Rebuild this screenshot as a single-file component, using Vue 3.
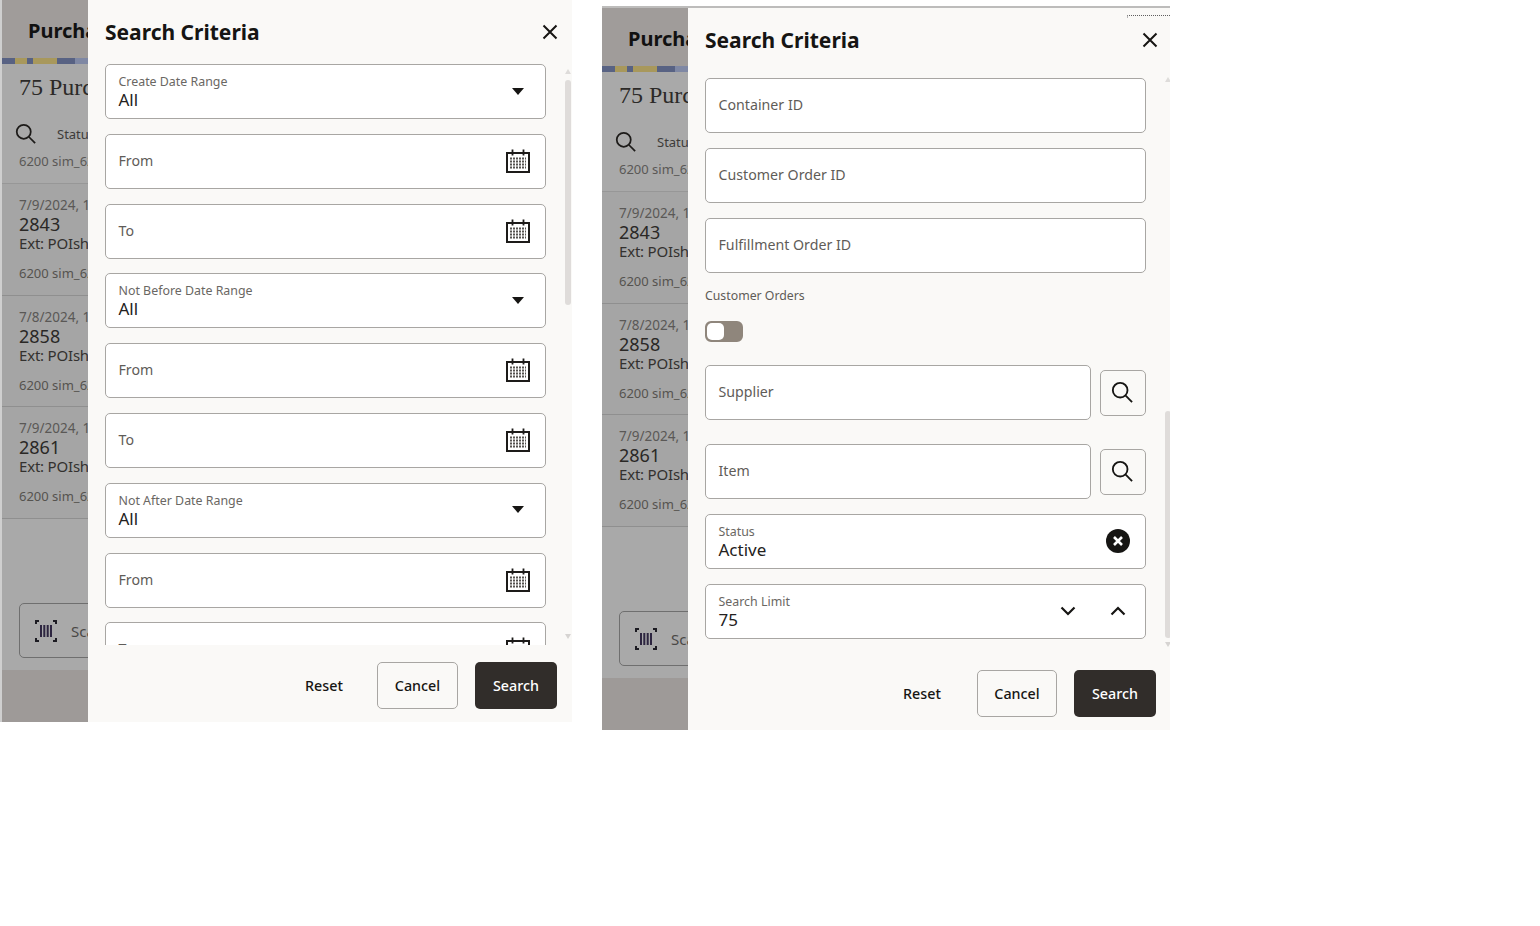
<script setup>
const orders = [
  { date: '7/9/2024, 1', id: '2843' },
  { date: '7/8/2024, 1', id: '2858' },
  { date: '7/9/2024, 1', id: '2861' },
]
const dateGroup = (label) => [
  { type: 'select', label, value: 'All' },
  { type: 'date', text: 'From' },
  { type: 'date', text: 'To' },
]
const panels = [
  {
    key: 'a',
    cls: 'panel-left',
    thumbTop: 16,
    thumbHeight: 225,
    fields: [
      ...dateGroup('Create Date Range'),
      ...dateGroup('Not Before Date Range'),
      ...dateGroup('Not After Date Range'),
    ],
  },
  {
    key: 'b',
    cls: 'panel-right',
    thumbTop: 339,
    thumbHeight: 227,
    fields: [
      { type: 'text', text: 'Container ID' },
      { type: 'text', text: 'Customer Order ID' },
      { type: 'text', text: 'Fulfillment Order ID' },
      { type: 'toggle', label: 'Customer Orders' },
      { type: 'lookup', text: 'Supplier', cls: 'lookup-first' },
      { type: 'lookup', text: 'Item', cls: 'lookup-second' },
      { type: 'clear', label: 'Status', value: 'Active' },
      { type: 'stepper', label: 'Search Limit', value: '75' },
    ],
  },
]
</script>

<template>
  <div class="page">
    <section v-for="panel in panels" :key="panel.key" class="panel" :class="panel.cls">
      <div class="behind">
        <div class="app-head">Purchase Orders</div>
        <div class="stripe"></div>
        <div class="count">75 Purchase Orders</div>
        <div class="tools">
          <svg class="tool-search" viewBox="0 0 24 24" fill="none" stroke="#1d1b19" stroke-width="2">
            <circle cx="10" cy="10" r="8" />
            <path d="M16 16l7 7" />
          </svg>
          <span>Status</span>
        </div>
        <div class="list">
          <div class="row-tail">6200 sim_6200</div>
          <div v-for="o in orders" :key="o.id" class="order">
            <div class="o-date">{{ o.date }}</div>
            <div class="o-id">{{ o.id }}</div>
            <div class="o-ext">Ext: POIshtest</div>
            <div class="o-loc">6200 sim_6200</div>
          </div>
        </div>
        <div class="scan-wrap">
          <div class="scan">
            <svg class="barcode" viewBox="0 0 24 24" fill="none">
              <path d="M2 5V2H5M19 2H22V5M2 19V22H5M19 22H22V19" stroke="#1c1b22" stroke-width="2" />
              <path d="M7 6V18M10.300 6V18M13.700 6V18M17 6V18" stroke="#2d2540" stroke-width="2" />
            </svg>
            <span>Scan</span>
          </div>
        </div>
        <div class="behind-foot"></div>
      </div>

      <div class="drawer">
        <header class="d-head">
          <h2>Search Criteria</h2>
          <svg class="close" viewBox="0 0 18 18" fill="none" stroke="#161513" stroke-width="2">
            <path d="M2.500 2.500l13 13M15.500 2.500l-13 13" />
          </svg>
        </header>

        <div class="d-body">
          <div class="fields">
            <template v-for="(f, i) in panel.fields" :key="i">
              <div v-if="f.type === 'toggle'" class="toggle-block">
                <div class="toggle-label">{{ f.label }}</div>
                <div class="toggle"><span class="knob"></span></div>
              </div>

              <div v-else-if="f.type === 'lookup'" class="lookup" :class="f.cls">
                <div class="field"><span class="ph">{{ f.text }}</span></div>
                <button class="lookup-btn" type="button" aria-label="Search">
                  <svg viewBox="0 0 24 24" fill="none" stroke="#161513" stroke-width="2">
                    <circle cx="10" cy="10" r="8" />
                    <path d="M16 16l7 7" />
                  </svg>
                </button>
              </div>

              <div v-else class="field">
                <div v-if="f.label" class="stack">
                  <span class="flabel">{{ f.label }}</span>
                  <span class="fvalue">{{ f.value }}</span>
                </div>
                <span v-else class="ph">{{ f.text }}</span>

                <svg v-if="f.type === 'select'" class="caret" viewBox="0 0 12 7">
                  <path d="M0 0h12L6 7z" fill="#161513" />
                </svg>

                <svg v-if="f.type === 'date'" class="cal" viewBox="0 0 24 24">
                  <path d="M1 4h22v19H1z" fill="none" stroke="#1d1b19" stroke-width="2" />
                  <path d="M6.500 0.500v6M17.500 0.500v6" stroke="#1d1b19" stroke-width="1.800" />
                  <path d="M4 9.500h16M4 12.500h16M4 15.500h16M4 18.500h16" stroke="#55524f" stroke-width="2" stroke-dasharray="2 1" />
                </svg>

                <svg v-if="f.type === 'clear'" class="clear" viewBox="0 0 24 24">
                  <circle cx="12" cy="12" r="12" fill="#161513" />
                  <path d="M8 8l8 8M16 8l-8 8" stroke="#fff" stroke-width="2.600" />
                </svg>

                <div v-if="f.type === 'stepper'" class="steps">
                  <svg viewBox="0 0 16 10" fill="none" stroke="#161513" stroke-width="2.200"><path d="M1.500 1.500L8 8l6.500-6.500" /></svg>
                  <svg viewBox="0 0 16 10" fill="none" stroke="#161513" stroke-width="2.200"><path d="M1.500 8.500L8 2l6.500 6.500" /></svg>
                </div>
              </div>
            </template>
          </div>

          <div class="scrollbar">
            <span class="arrow arrow-up"></span>
            <span class="thumb" :style="{ top: panel.thumbTop + 'px', height: panel.thumbHeight + 'px' }"></span>
            <span class="arrow arrow-down"></span>
          </div>
        </div>

        <footer class="d-foot">
          <button class="btn btn-text" type="button">Reset</button>
          <button class="btn btn-line" type="button">Cancel</button>
          <button class="btn btn-dark" type="button">Search</button>
        </footer>

        <span v-if="panel.key === 'b'" class="dotted"></span>
      </div>
    </section>
  </div>
</template>

<style scoped>
.page {
  display: flex;
  align-items: flex-start;
  gap: 30px;
  padding-left: 2px;
  height: 926px;
  box-sizing: border-box;
  background: #fff;
  font-family: "Noto Sans", "Open Sans", sans-serif;
  overflow: hidden;
}
.panel {
  display: flex;
  height: 722px;
  box-shadow: 0 -2px 0 #bdbcbb;
  flex: none;
  position: relative;
}
.panel-left { width: 570px; box-shadow: -2px 0 0 #cfcfcf; }
.panel-right { width: 568px; margin-top: 8px; }

.behind {
  width: 86px;
  flex: none;
  display: flex;
  flex-direction: column;
  overflow: hidden;
  background: #a9a9a9;
  white-space: nowrap;
}
.app-head {
  height: 58px;
  flex: none;
  box-sizing: border-box;
  padding: 17px 0 0 26px;
  background: #a09c9a;
  color: #111;
  font-size: 20px;
  line-height: 27px;
  font-weight: 700;
}
.stripe {
  height: 6px;
  flex: none;
  background: linear-gradient(90deg, #586283 0 13px, #a8985c 13px 25px, #586283 25px 31px, #a8985c 31px 55px, #586283 55px 73px, #7f88a4 73px 86px);
}
.count {
  height: 48px;
  flex: none;
  box-sizing: border-box;
  padding: 8px 0 0 17px;
  font-family: "Liberation Serif", serif;
  font-size: 24px;
  line-height: 30px;
  color: #2c2a28;
}
.tools {
  height: 44px;
  flex: none;
  display: flex;
  align-items: center;
  gap: 20px;
  padding-left: 13px;
  color: #3d3b39;
  font-size: 13px;
}
.tool-search { width: 21px; height: 21px; flex: none; margin-top: -1px; margin-right: 1px; }
.tools span { margin-top: -1px; }
.list {
  height: 363px;
  flex: none;
  color: #3a3836;
  background: #a5a5a5;
}
.row-tail {
  height: 28px;
  padding-left: 17px;
  box-sizing: border-box;
  border-bottom: 1px solid #979797;
  background: #a9a9a9;
  font-size: 13px;
  line-height: 10px;
  color: #5a5856;
}
.order {
  height: 111.700px;
  padding: 11px 0 0 17px;
  box-sizing: border-box;
  border-bottom: 1px solid #8f8f8f;
}
.o-date { font-size: 13.500px; line-height: 20px; color: #5a5856; }
.o-id { font-size: 18px; line-height: 20px; margin-top: -1px; color: #2a2826; }
.o-ext { font-size: 15px; line-height: 18px; color: #33312f; letter-spacing: -0.2px; }
.o-loc { font-size: 13px; line-height: 18px; margin-top: 12px; color: #55534f; }
.scan-wrap { flex: 1; padding: 84px 0 0 17px; }
.scan {
  width: 120px;
  height: 55px;
  box-sizing: border-box;
  border: 1.500px solid #6f6f6f;
  border-radius: 5px;
  display: flex;
  align-items: center;
  gap: 13px;
  padding-left: 14px;
  color: #4a4846;
  font-size: 15px;
}
.barcode { width: 24px; height: 24px; flex: none; }
.behind-foot { height: 52px; flex: none; background: #9e9a98; }

.drawer {
  flex: 1;
  min-width: 0;
  display: flex;
  flex-direction: column;
  background: #faf9f7;
  position: relative;
}
.d-head {
  height: 64px;
  flex: none;
  display: flex;
  align-items: center;
  justify-content: space-between;
  box-sizing: border-box;
  padding: 0 0 0 17px;
  width: 471px;
}
.d-head h2 {
  margin: 0;
  font-size: 21px;
  font-weight: 700;
  color: #161513;
  line-height: 28px;
}
.close { width: 18px; height: 18px; }
.d-body { height: 581px; flex: none; position: relative; overflow: hidden; }
.fields {
  width: 441px;
  margin-left: 17px;
  display: flex;
  flex-direction: column;
  gap: 14.800px;
}
.panel-right .fields { padding-top: 6px; gap: 15px; }

.field {
  height: 55px;
  flex: none;
  box-sizing: border-box;
  background: #fff;
  border: 1.500px solid #a8a6a3;
  border-radius: 5px;
  display: flex;
  align-items: center;
  justify-content: space-between;
  padding: 0 14px 0 12.500px;
}
.ph { font-size: 14.200px; line-height: 20px; color: #5f5c58; margin-top: -1px; }
.stack { display: flex; flex-direction: column; }
.flabel { font-size: 12.400px; line-height: 17px; color: #6a6763; margin-top: -2px; }
.fvalue { font-size: 17px; line-height: 18px; color: #232120; margin-top: 1px; margin-bottom: -1px; }
.caret { width: 12px; height: 7px; margin-right: 7px; margin-top: -1px; }
.cal { width: 24px; height: 24px; margin-top: -1px; margin-right: 1px; }
.clear { width: 24px; height: 24px; margin-top: -2px; margin-right: 1px; }
.steps { display: flex; gap: 34px; margin-right: 5px; }
.steps svg { width: 16px; height: 10px; display: block; margin-top: -2px; }

.toggle-block { margin-top: -1px; }
.toggle-label { font-size: 12.300px; line-height: 18px; color: #5f5c58; }
.toggle {
  width: 38px;
  height: 21px;
  box-sizing: border-box;
  margin-top: 16px;
  background: #8f867c;
  border: 2px solid #8f867c;
  border-radius: 6px;
  display: flex;
}
.knob { width: 17px; height: 17px; background: #fff; border-radius: 5px; }
.lookup { display: flex; align-items: center; gap: 9px; }
.lookup .field { flex: 1; }
.lookup-first { margin-top: 8px; }
.lookup-second { margin-top: 9px; }
.lookup-btn {
  width: 46px;
  height: 46px;
  flex: none;
  padding: 0 2px 2px 0;
  background: #faf9f7;
  border: 1.500px solid #a8a6a3;
  border-radius: 5px;
  display: flex;
  align-items: center;
  justify-content: center;
}
.lookup-btn svg { width: 22px; height: 22px; }

.scrollbar { position: absolute; left: 477px; top: 0; bottom: 0; width: 6px; }
.thumb { position: absolute; left: 0; width: 6px; background: #dfdcda; border-radius: 3px; }
.arrow {
  position: absolute;
  left: 0;
  width: 0;
  height: 0;
  border-left: 3.500px solid transparent;
  border-right: 3.500px solid transparent;
}
.arrow-up { top: 5px; border-bottom: 5px solid #dedcda; }
.arrow-down { top: 570px; border-top: 5px solid #d6d4d2; }

.d-foot {
  height: 77px;
  flex: none;
  box-sizing: border-box;
  padding: 17px 0 0;
  width: 469px;
  display: flex;
  justify-content: flex-end;
  align-items: flex-start;
  gap: 17px;
}
.panel-right .d-foot { width: 468px; }
.btn {
  height: 47px;
  box-sizing: border-box;
  border-radius: 5px;
  font-family: inherit;
  font-size: 14.300px;
  font-weight: 500;
  padding: 0 0 1px;
}
.btn-text { width: 74px; border: 0; background: transparent; color: #161513; margin-right: -1px; }
.btn-line { width: 81px; border: 1.500px solid #a8a6a3; background: #faf9f7; color: #161513; }
.btn-dark { width: 82px; border: 0; background: #312d2a; color: #fff; }
.panel-right .btn-line { width: 80px; }
.panel-right .btn-text { margin-right: 1px; }
.dotted {
  position: absolute;
  top: 7px;
  right: 0;
  width: 43px;
  height: 3px;
  border-top: 1px dotted #5f5f5f;
  border-left: 1px solid #b5b5b5;
  box-sizing: border-box;
}
</style>

<style>
body { background: #fff; }
</style>
